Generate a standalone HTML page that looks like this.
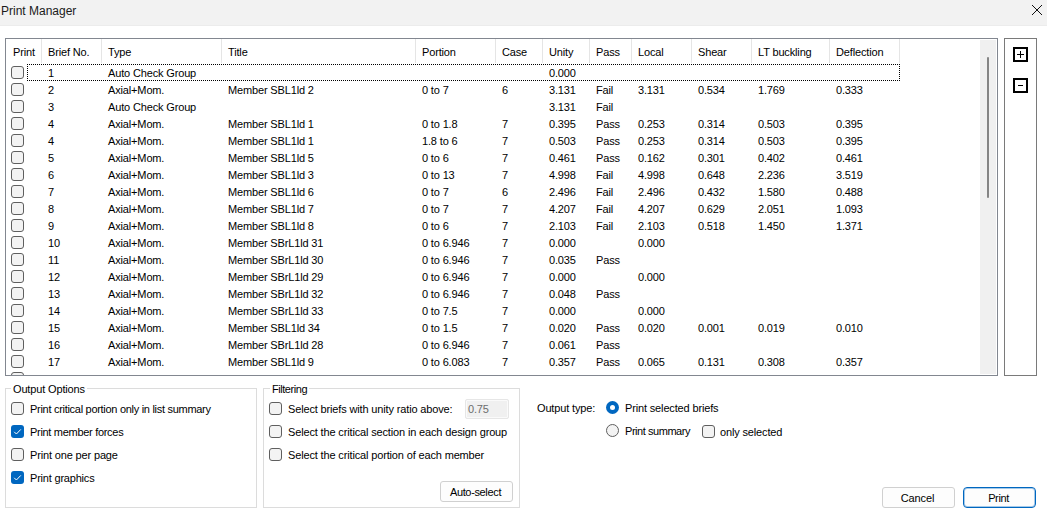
<!DOCTYPE html>
<html><head><meta charset="utf-8"><style>
*{margin:0;padding:0;box-sizing:border-box}
html,body{width:1047px;height:517px;overflow:hidden;background:#fff;font-family:"Liberation Sans",sans-serif;font-size:11px;color:#000}
.a{position:absolute}
.t{position:absolute;white-space:nowrap;line-height:17px;height:17px;letter-spacing:-0.15px}
.cb{position:absolute;width:13px;height:13px;border:1px solid #5f5f5f;border-radius:3px;background:#f3f3f3}
.cbc{position:absolute;width:13px;height:13px;border-radius:3px;background:#0067c0}
.sep{position:absolute;top:39px;width:1px;height:24px;background:#e5e5e5}
.lbl{position:absolute;white-space:nowrap;line-height:14px;letter-spacing:-0.15px}
</style></head><body>

<div class="a" style="left:0;top:0;width:1047px;height:26px;background:#f2f2f2;border-bottom:1px solid #ececec"></div>
<div class="a" style="left:1px;top:4px;font-size:12px;line-height:15px;color:#1a1a1a;white-space:nowrap">Print Manager</div>
<svg class="a" style="left:1031px;top:4px" width="12" height="12" viewBox="0 0 12 12"><path d="M1 1L11 11M11 1L1 11" stroke="#111" stroke-width="1"/></svg>
<div class="a" style="left:5px;top:38px;width:993px;height:338px;border:1px solid #828790;overflow:hidden">
</div>
<div class="t" style="left:13px;top:40px;line-height:25px;height:25px">Print</div>
<div class="t" style="left:48px;top:40px;line-height:25px;height:25px">Brief No.</div>
<div class="t" style="left:108px;top:40px;line-height:25px;height:25px">Type</div>
<div class="t" style="left:228px;top:40px;line-height:25px;height:25px">Title</div>
<div class="t" style="left:422px;top:40px;line-height:25px;height:25px">Portion</div>
<div class="t" style="left:502px;top:40px;line-height:25px;height:25px">Case</div>
<div class="t" style="left:549px;top:40px;line-height:25px;height:25px">Unity</div>
<div class="t" style="left:596px;top:40px;line-height:25px;height:25px">Pass</div>
<div class="t" style="left:638px;top:40px;line-height:25px;height:25px">Local</div>
<div class="t" style="left:698px;top:40px;line-height:25px;height:25px">Shear</div>
<div class="t" style="left:758px;top:40px;line-height:25px;height:25px">LT buckling</div>
<div class="t" style="left:836px;top:40px;line-height:25px;height:25px">Deflection</div>
<div class="sep" style="left:41px"></div>
<div class="sep" style="left:101px"></div>
<div class="sep" style="left:221px"></div>
<div class="sep" style="left:415px"></div>
<div class="sep" style="left:495px"></div>
<div class="sep" style="left:542px"></div>
<div class="sep" style="left:589px"></div>
<div class="sep" style="left:631px"></div>
<div class="sep" style="left:691px"></div>
<div class="sep" style="left:751px"></div>
<div class="sep" style="left:829px"></div>
<div class="sep" style="left:899px"></div>
<div class="a" style="left:6px;top:64px;width:974px;height:311px;overflow:hidden"><div class="a" style="left:-6px;top:-64px;width:1047px;height:517px">
<div class="cb" style="left:11px;top:66px"></div>
<div class="t" style="left:48px;top:65px">1</div>
<div class="t" style="left:108px;top:65px">Auto Check Group</div>
<div class="t" style="left:549px;top:65px">0.000</div>
<div class="cb" style="left:11px;top:83px"></div>
<div class="t" style="left:48px;top:82px">2</div>
<div class="t" style="left:108px;top:82px">Axial+Mom.</div>
<div class="t" style="left:228px;top:82px">Member SBL1ld 2</div>
<div class="t" style="left:422px;top:82px">0 to 7</div>
<div class="t" style="left:502px;top:82px">6</div>
<div class="t" style="left:549px;top:82px">3.131</div>
<div class="t" style="left:596px;top:82px">Fail</div>
<div class="t" style="left:638px;top:82px">3.131</div>
<div class="t" style="left:698px;top:82px">0.534</div>
<div class="t" style="left:758px;top:82px">1.769</div>
<div class="t" style="left:836px;top:82px">0.333</div>
<div class="cb" style="left:11px;top:100px"></div>
<div class="t" style="left:48px;top:99px">3</div>
<div class="t" style="left:108px;top:99px">Auto Check Group</div>
<div class="t" style="left:549px;top:99px">3.131</div>
<div class="t" style="left:596px;top:99px">Fail</div>
<div class="cb" style="left:11px;top:117px"></div>
<div class="t" style="left:48px;top:116px">4</div>
<div class="t" style="left:108px;top:116px">Axial+Mom.</div>
<div class="t" style="left:228px;top:116px">Member SBL1ld 1</div>
<div class="t" style="left:422px;top:116px">0 to 1.8</div>
<div class="t" style="left:502px;top:116px">7</div>
<div class="t" style="left:549px;top:116px">0.395</div>
<div class="t" style="left:596px;top:116px">Pass</div>
<div class="t" style="left:638px;top:116px">0.253</div>
<div class="t" style="left:698px;top:116px">0.314</div>
<div class="t" style="left:758px;top:116px">0.503</div>
<div class="t" style="left:836px;top:116px">0.395</div>
<div class="cb" style="left:11px;top:134px"></div>
<div class="t" style="left:48px;top:133px">4</div>
<div class="t" style="left:108px;top:133px">Axial+Mom.</div>
<div class="t" style="left:228px;top:133px">Member SBL1ld 1</div>
<div class="t" style="left:422px;top:133px">1.8 to 6</div>
<div class="t" style="left:502px;top:133px">7</div>
<div class="t" style="left:549px;top:133px">0.503</div>
<div class="t" style="left:596px;top:133px">Pass</div>
<div class="t" style="left:638px;top:133px">0.253</div>
<div class="t" style="left:698px;top:133px">0.314</div>
<div class="t" style="left:758px;top:133px">0.503</div>
<div class="t" style="left:836px;top:133px">0.395</div>
<div class="cb" style="left:11px;top:151px"></div>
<div class="t" style="left:48px;top:150px">5</div>
<div class="t" style="left:108px;top:150px">Axial+Mom.</div>
<div class="t" style="left:228px;top:150px">Member SBL1ld 5</div>
<div class="t" style="left:422px;top:150px">0 to 6</div>
<div class="t" style="left:502px;top:150px">7</div>
<div class="t" style="left:549px;top:150px">0.461</div>
<div class="t" style="left:596px;top:150px">Pass</div>
<div class="t" style="left:638px;top:150px">0.162</div>
<div class="t" style="left:698px;top:150px">0.301</div>
<div class="t" style="left:758px;top:150px">0.402</div>
<div class="t" style="left:836px;top:150px">0.461</div>
<div class="cb" style="left:11px;top:168px"></div>
<div class="t" style="left:48px;top:167px">6</div>
<div class="t" style="left:108px;top:167px">Axial+Mom.</div>
<div class="t" style="left:228px;top:167px">Member SBL1ld 3</div>
<div class="t" style="left:422px;top:167px">0 to 13</div>
<div class="t" style="left:502px;top:167px">7</div>
<div class="t" style="left:549px;top:167px">4.998</div>
<div class="t" style="left:596px;top:167px">Fail</div>
<div class="t" style="left:638px;top:167px">4.998</div>
<div class="t" style="left:698px;top:167px">0.648</div>
<div class="t" style="left:758px;top:167px">2.236</div>
<div class="t" style="left:836px;top:167px">3.519</div>
<div class="cb" style="left:11px;top:185px"></div>
<div class="t" style="left:48px;top:184px">7</div>
<div class="t" style="left:108px;top:184px">Axial+Mom.</div>
<div class="t" style="left:228px;top:184px">Member SBL1ld 6</div>
<div class="t" style="left:422px;top:184px">0 to 7</div>
<div class="t" style="left:502px;top:184px">6</div>
<div class="t" style="left:549px;top:184px">2.496</div>
<div class="t" style="left:596px;top:184px">Fail</div>
<div class="t" style="left:638px;top:184px">2.496</div>
<div class="t" style="left:698px;top:184px">0.432</div>
<div class="t" style="left:758px;top:184px">1.580</div>
<div class="t" style="left:836px;top:184px">0.488</div>
<div class="cb" style="left:11px;top:202px"></div>
<div class="t" style="left:48px;top:201px">8</div>
<div class="t" style="left:108px;top:201px">Axial+Mom.</div>
<div class="t" style="left:228px;top:201px">Member SBL1ld 7</div>
<div class="t" style="left:422px;top:201px">0 to 7</div>
<div class="t" style="left:502px;top:201px">7</div>
<div class="t" style="left:549px;top:201px">4.207</div>
<div class="t" style="left:596px;top:201px">Fail</div>
<div class="t" style="left:638px;top:201px">4.207</div>
<div class="t" style="left:698px;top:201px">0.629</div>
<div class="t" style="left:758px;top:201px">2.051</div>
<div class="t" style="left:836px;top:201px">1.093</div>
<div class="cb" style="left:11px;top:219px"></div>
<div class="t" style="left:48px;top:218px">9</div>
<div class="t" style="left:108px;top:218px">Axial+Mom.</div>
<div class="t" style="left:228px;top:218px">Member SBL1ld 8</div>
<div class="t" style="left:422px;top:218px">0 to 6</div>
<div class="t" style="left:502px;top:218px">7</div>
<div class="t" style="left:549px;top:218px">2.103</div>
<div class="t" style="left:596px;top:218px">Fail</div>
<div class="t" style="left:638px;top:218px">2.103</div>
<div class="t" style="left:698px;top:218px">0.518</div>
<div class="t" style="left:758px;top:218px">1.450</div>
<div class="t" style="left:836px;top:218px">1.371</div>
<div class="cb" style="left:11px;top:236px"></div>
<div class="t" style="left:48px;top:235px">10</div>
<div class="t" style="left:108px;top:235px">Axial+Mom.</div>
<div class="t" style="left:228px;top:235px">Member SBrL1ld 31</div>
<div class="t" style="left:422px;top:235px">0 to 6.946</div>
<div class="t" style="left:502px;top:235px">7</div>
<div class="t" style="left:549px;top:235px">0.000</div>
<div class="t" style="left:638px;top:235px">0.000</div>
<div class="cb" style="left:11px;top:253px"></div>
<div class="t" style="left:48px;top:252px">11</div>
<div class="t" style="left:108px;top:252px">Axial+Mom.</div>
<div class="t" style="left:228px;top:252px">Member SBrL1ld 30</div>
<div class="t" style="left:422px;top:252px">0 to 6.946</div>
<div class="t" style="left:502px;top:252px">7</div>
<div class="t" style="left:549px;top:252px">0.035</div>
<div class="t" style="left:596px;top:252px">Pass</div>
<div class="cb" style="left:11px;top:270px"></div>
<div class="t" style="left:48px;top:269px">12</div>
<div class="t" style="left:108px;top:269px">Axial+Mom.</div>
<div class="t" style="left:228px;top:269px">Member SBrL1ld 29</div>
<div class="t" style="left:422px;top:269px">0 to 6.946</div>
<div class="t" style="left:502px;top:269px">7</div>
<div class="t" style="left:549px;top:269px">0.000</div>
<div class="t" style="left:638px;top:269px">0.000</div>
<div class="cb" style="left:11px;top:287px"></div>
<div class="t" style="left:48px;top:286px">13</div>
<div class="t" style="left:108px;top:286px">Axial+Mom.</div>
<div class="t" style="left:228px;top:286px">Member SBrL1ld 32</div>
<div class="t" style="left:422px;top:286px">0 to 6.946</div>
<div class="t" style="left:502px;top:286px">7</div>
<div class="t" style="left:549px;top:286px">0.048</div>
<div class="t" style="left:596px;top:286px">Pass</div>
<div class="cb" style="left:11px;top:304px"></div>
<div class="t" style="left:48px;top:303px">14</div>
<div class="t" style="left:108px;top:303px">Axial+Mom.</div>
<div class="t" style="left:228px;top:303px">Member SBrL1ld 33</div>
<div class="t" style="left:422px;top:303px">0 to 7.5</div>
<div class="t" style="left:502px;top:303px">7</div>
<div class="t" style="left:549px;top:303px">0.000</div>
<div class="t" style="left:638px;top:303px">0.000</div>
<div class="cb" style="left:11px;top:321px"></div>
<div class="t" style="left:48px;top:320px">15</div>
<div class="t" style="left:108px;top:320px">Axial+Mom.</div>
<div class="t" style="left:228px;top:320px">Member SBL1ld 34</div>
<div class="t" style="left:422px;top:320px">0 to 1.5</div>
<div class="t" style="left:502px;top:320px">7</div>
<div class="t" style="left:549px;top:320px">0.020</div>
<div class="t" style="left:596px;top:320px">Pass</div>
<div class="t" style="left:638px;top:320px">0.020</div>
<div class="t" style="left:698px;top:320px">0.001</div>
<div class="t" style="left:758px;top:320px">0.019</div>
<div class="t" style="left:836px;top:320px">0.010</div>
<div class="cb" style="left:11px;top:338px"></div>
<div class="t" style="left:48px;top:337px">16</div>
<div class="t" style="left:108px;top:337px">Axial+Mom.</div>
<div class="t" style="left:228px;top:337px">Member SBrL1ld 28</div>
<div class="t" style="left:422px;top:337px">0 to 6.946</div>
<div class="t" style="left:502px;top:337px">7</div>
<div class="t" style="left:549px;top:337px">0.061</div>
<div class="t" style="left:596px;top:337px">Pass</div>
<div class="cb" style="left:11px;top:355px"></div>
<div class="t" style="left:48px;top:354px">17</div>
<div class="t" style="left:108px;top:354px">Axial+Mom.</div>
<div class="t" style="left:228px;top:354px">Member SBL1ld 9</div>
<div class="t" style="left:422px;top:354px">0 to 6.083</div>
<div class="t" style="left:502px;top:354px">7</div>
<div class="t" style="left:549px;top:354px">0.357</div>
<div class="t" style="left:596px;top:354px">Pass</div>
<div class="t" style="left:638px;top:354px">0.065</div>
<div class="t" style="left:698px;top:354px">0.131</div>
<div class="t" style="left:758px;top:354px">0.308</div>
<div class="t" style="left:836px;top:354px">0.357</div>
<div class="cb" style="left:11px;top:372px"></div>
<div class="t" style="left:48px;top:371px">18</div>
<div class="t" style="left:108px;top:371px">Axial+Mom.</div>
<div class="t" style="left:228px;top:371px">Member SBL1ld 10</div>
<div class="t" style="left:422px;top:371px">0 to 6.083</div>
<div class="t" style="left:502px;top:371px">7</div>
<div class="t" style="left:549px;top:371px">0.357</div>
<div class="t" style="left:596px;top:371px">Pass</div>
<div class="t" style="left:638px;top:371px">0.065</div>
<div class="t" style="left:698px;top:371px">0.131</div>
<div class="t" style="left:758px;top:371px">0.308</div>
<div class="t" style="left:836px;top:371px">0.357</div>
</div></div>
<div class="a" style="left:27px;top:64px;width:873px;height:17px;border:1px dotted #000"></div>
<div class="a" style="left:980px;top:40px;width:16px;height:334px;background:#f0f0f0"></div>
<div class="a" style="left:987px;top:57px;width:2px;height:141px;background:#858585;border-radius:1px"></div>
<div class="a" style="left:1004px;top:38px;width:33px;height:338px;border:1px solid #7a7a7a"></div>
<div class="a" style="left:1013px;top:47px;width:15px;height:15px;border:2px solid #000"></div>
<div class="a" style="left:1017px;top:54px;width:7px;height:1px;background:#000"></div>
<div class="a" style="left:1020px;top:51px;width:1px;height:7px;background:#000"></div>
<div class="a" style="left:1013px;top:78px;width:15px;height:15px;border:2px solid #000"></div>
<div class="a" style="left:1018px;top:85px;width:5px;height:1px;background:#000"></div>
<div class="a" style="left:5px;top:388px;width:252px;height:120px;border:1px solid #dcdcdc"></div>
<div class="lbl" style="left:11px;top:382px;padding:0 2px;background:#fff;letter-spacing:-0.15px">Output Options</div>
<div class="a" style="left:263px;top:388px;width:257px;height:120px;border:1px solid #dcdcdc"></div>
<div class="lbl" style="left:270px;top:382px;padding:0 2px;background:#fff;letter-spacing:-0.45px">Filtering</div>
<div class="cb" style="left:11px;top:402px"></div>
<div class="lbl" style="left:30px;top:402px;letter-spacing:-0.29px">Print critical portion only in list summary</div>
<div class="cbc" style="left:11px;top:425px"><svg class="a" style="left:0;top:0" width="13" height="13" viewBox="0 0 13 13"><path d="M3.2 6.8L5.4 9L9.8 4.4" stroke="#fff" stroke-width="1" fill="none"/></svg></div>
<div class="lbl" style="left:30px;top:425px;letter-spacing:-0.3px">Print member forces</div>
<div class="cb" style="left:11px;top:448px"></div>
<div class="lbl" style="left:30px;top:448px;letter-spacing:-0.15px">Print one per page</div>
<div class="cbc" style="left:11px;top:471px"><svg class="a" style="left:0;top:0" width="13" height="13" viewBox="0 0 13 13"><path d="M3.2 6.8L5.4 9L9.8 4.4" stroke="#fff" stroke-width="1" fill="none"/></svg></div>
<div class="lbl" style="left:30px;top:471px;letter-spacing:-0.2px">Print graphics</div>
<div class="cb" style="left:269px;top:402px"></div>
<div class="lbl" style="left:288px;top:402px">Select briefs with unity ratio above:</div>
<div class="cb" style="left:269px;top:425px"></div>
<div class="lbl" style="left:288px;top:425px">Select the critical section in each design group</div>
<div class="cb" style="left:269px;top:448px"></div>
<div class="lbl" style="left:288px;top:448px">Select the critical portion of each member</div>
<div class="a" style="left:465px;top:399px;width:44px;height:20px;background:#f0f0f0;border:1px solid #e6e6e6;border-radius:2px;box-shadow:inset 0 0 0 1px #fafafa"></div>
<div class="lbl" style="left:468px;top:402px;color:#6d6d6d">0.75</div>
<div class="a" style="left:440px;top:481px;width:73px;height:21px;background:#fdfdfd;border:1px solid #d0d0d0;border-radius:3px"></div>
<div class="lbl" style="left:439px;top:485px;width:73px;text-align:center;letter-spacing:-0.35px">Auto-select</div>
<div class="lbl" style="left:537px;top:401px">Output type:</div>
<div class="a" style="left:606px;top:401px;width:13px;height:13px;border-radius:50%;background:#0067c0"></div>
<div class="a" style="left:610px;top:405px;width:5px;height:5px;border-radius:50%;background:#fff"></div>
<div class="lbl" style="left:625px;top:401px">Print selected briefs</div>
<div class="a" style="left:606px;top:424px;width:13px;height:13px;border-radius:50%;background:#f3f3f3;border:1px solid #5f5f5f"></div>
<div class="lbl" style="left:625px;top:424px;letter-spacing:-0.45px">Print summary</div>
<div class="cb" style="left:702px;top:425px"></div>
<div class="lbl" style="left:720px;top:425px">only selected</div>
<div class="a" style="left:882px;top:487px;width:73px;height:21px;background:#fdfdfd;border:1px solid #d0d0d0;border-radius:3px"></div>
<div class="lbl" style="left:881px;top:491px;width:73px;text-align:center">Cancel</div>
<div class="a" style="left:963px;top:487px;width:73px;height:21px;background:#fdfdfd;border:1px solid #0067c0;box-shadow:inset 0 0 0 1px rgba(0,103,192,0.35);border-radius:4px"></div>
<div class="lbl" style="left:962px;top:491px;width:73px;text-align:center;letter-spacing:-0.4px">Print</div>
</body></html>
